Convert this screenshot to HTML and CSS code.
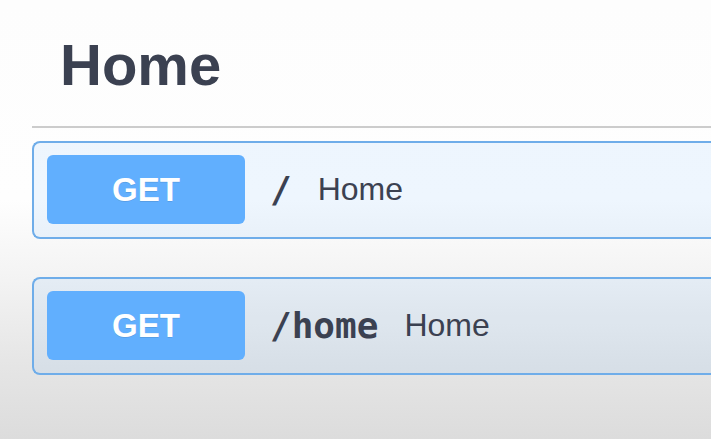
FILE: index.html
```html
<!DOCTYPE html>
<html>
<head>
<meta charset="utf-8">
<link rel="stylesheet" href="styles.css">
</head>
<body>
<main class="page">
  <h2 class="tag-title">Home</h2>
  <div class="op">
    <span class="method">GET</span>
    <span class="path">/</span>
    <span class="desc">Home</span>
  </div>
  <div class="op op-second">
    <span class="method">GET</span>
    <span class="path">/home</span>
    <span class="desc">Home</span>
  </div>
</main>
</body>
</html>
```
FILE: styles.css
```css
html, body {
  margin: 0;
  height: 100%;
}
body {
  overflow: hidden;
  background: linear-gradient(to bottom, #fdfdfd 0, #fefefe 200px, #f3f3f3 280px, #e6e6e6 360px, #dcdcdc 439px);
  font-family: "Liberation Sans", Arial, sans-serif;
  color: #3b4151;
}
.page {
  padding-left: 32px;
}
.tag-title {
  margin: 0;
  padding: 27px 0 23px 28px;
  font-size: 58px;
  line-height: 76px;
  font-weight: bold;
  color: #3b4151;
  border-bottom: 2px solid #cccccc;
}
.op {
  margin-top: 13px;
  display: flex;
  align-items: center;
  padding: 12px 13px 13px;
  border: 2px solid #6fade9;
  border-right: none;
  border-radius: 8px 0 0 8px;
  background: rgba(97, 175, 254, 0.1);
}
.op-second {
  margin-top: 38px;
}
.method {
  width: 198px;
  height: 69px;
  flex: none;
  display: flex;
  align-items: center;
  justify-content: center;
  background: #61affe;
  border-radius: 6px;
  color: #ffffff;
  font-size: 33px;
  font-weight: bold;
  text-shadow: 0 1px 0 rgba(0, 0, 0, 0.1);
}
.path {
  margin-left: 25px;
  font-family: "DejaVu Sans Mono", "Liberation Mono", monospace;
  font-weight: bold;
  font-size: 36px;
  color: #3b4151;
}
.desc {
  margin-left: 26px;
  font-size: 32px;
  color: #3b4151;
}
```
